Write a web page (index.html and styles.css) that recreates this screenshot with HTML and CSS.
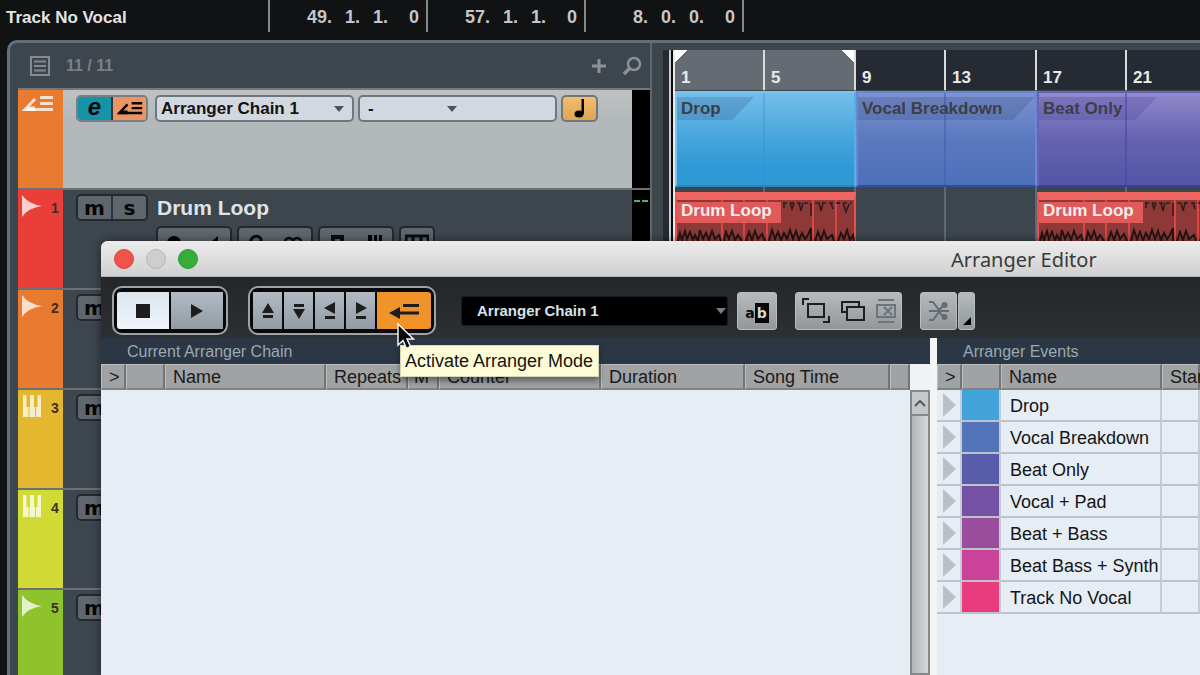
FILE: index.html
```html
<!DOCTYPE html>
<html lang="en">
<head>
<meta charset="utf-8">
<title>Arranger Editor</title>
<link rel="stylesheet" href="styles.css">
</head>
<body>
<svg class="defs" aria-hidden="true">
  <symbol id="arr" viewBox="0 0 32 18"><path d="M13 4 3 14.500H31" fill="none" stroke="currentColor" stroke-width="3"/><path d="M2 16 6 11.500H13V16ZM18 1H31V4H18ZM18 7H31V10H18Z" fill="currentColor"/></symbol>
  <symbol id="audio" viewBox="0 0 20 22"><path d="M0 0Q6 9 20 11Q6 13 0 22Z" fill="currentColor"/></symbol>
  <symbol id="keys" viewBox="0 0 18 22"><path d="M0 0H3.500V12H5.500V22H0ZM7 12V0H11V12H12V22H6.500V12ZM14.500 0H18V22H13V12H14.500Z" fill="currentColor"/></symbol>
  <symbol id="wave" viewBox="0 0 180 40">
    <path d="M107 2H133M139 2H176" stroke="#2b1c1c" stroke-width="1.500" stroke-dasharray="4 3"/>
    <path d="M108 2v5M114 2l2 6 2-6M123 2l2 8 2-8M135 2v13M143 2l2 8 2-8M155 2l2 6M167 2l3 9 3-8" fill="none" stroke="#2b1c1c" stroke-width="1.500"/>
    <path d="M2 40 4 32 6 39 9 30 11 38 14 31 17 39 19 34 22 40 24 29 27 38 30 32 33 39 36 30 39 38 43 34 45 40M48 40 50 31 53 38 56 30 59 39 62 34 66 40M70 40 73 31 76 39 79 30 82 38 86 33 89 40M93 40 96 29 99 38 102 31 105 39 108 32 111 38 114 29 117 38 120 30 123 39 126 32 129 38 132 34 135 27V40M139 40 142 31 145 39 148 30 151 38 156 34 158 40M162 40 165 32 168 38 171 29 174 39 177 34 178 40" fill="none" stroke="#241515" stroke-width="2"/>
  </symbol>
</svg>

<header class="infoline">
  <span class="infoline-name">Track No Vocal</span>
  <span class="pos"><b>49.</b><b>1.</b><b>1.</b><b>0</b></span>
  <span class="pos"><b>57.</b><b>1.</b><b>1.</b><b>0</b></span>
  <span class="pos pos-last"><b>8.</b><b>0.</b><b>0.</b><b>0</b></span>
</header>

<main class="project">
  <section class="tracks">
    <div class="tracks-head">
      <svg width="20" height="20" viewBox="0 0 20 20"><path d="M1 1H19V19H1ZM4 5.500H16M4 10H16M4 14.500H16" fill="none" stroke="currentColor" stroke-width="2"/></svg>
      <span class="count">11 / 11</span>
      <button class="plain" aria-label="Add track"><svg width="14" height="14" viewBox="0 0 14 14"><path d="M7 0V14M0 7H14" stroke="currentColor" stroke-width="3"/></svg></button>
      <button class="plain" aria-label="Find track"><svg width="20" height="20" viewBox="0 0 20 20"><circle cx="12" cy="8" r="6" fill="none" stroke="currentColor" stroke-width="2.500"/><path d="M8 12 2 18" stroke="currentColor" stroke-width="3.500"/></svg></button>
    </div>

    <div class="track track-arranger">
      <div class="strip orange"><svg width="32" height="18"><use href="#arr"/></svg></div>
      <div class="track-body">
        <div class="line">
          <div class="pair"><button class="edit">e</button><button class="peach" aria-label="Arranger mode"><svg width="26" height="15"><use href="#arr"/></svg></button></div>
          <span class="picker picker-light"><select aria-label="Arranger chain"><option>Arranger Chain 1</option></select></span>
          <span class="picker picker-light picker-mid"><select aria-label="Current item"><option>-</option></select></span>
          <button class="note" aria-label="Jump mode"><svg width="12" height="19" viewBox="0 0 12 19"><ellipse cx="5" cy="15" rx="4.500" ry="3.500"/><path d="M7.500 0H10V15H7.500Z"/></svg></button>
        </div>
      </div>
      <div class="meter"></div>
    </div>

    <div class="track">
      <div class="strip red"><svg width="20" height="22"><use href="#audio"/></svg><span>1</span></div>
      <div class="track-body">
        <div class="line">
          <div class="pair"><button>m</button><button>s</button></div>
          <span class="track-name">Drum Loop</span>
        </div>
        <div class="line line-tools">
          <div class="tool"><svg width="54" height="20" viewBox="0 0 54 20"><circle cx="7" cy="9" r="7"/><path d="M40 7H45L51 2V18L45 13H40Z"/></svg></div>
          <div class="tool"><svg width="54" height="20" viewBox="0 0 54 20"><path d="M2 10Q14 11 13 5Q10 0 4 4Q0 10 5 16H12" fill="none" stroke="#0b0c0d" stroke-width="3"/><circle cx="41" cy="8" r="4" fill="none" stroke="#0b0c0d" stroke-width="2.500"/><circle cx="49" cy="8" r="4" fill="none" stroke="#0b0c0d" stroke-width="2.500"/></svg></div>
          <div class="tool"><svg width="54" height="20" viewBox="0 0 54 20"><path d="M2 3H13V10H2M4 2V18M8 10 13 18" fill="none" stroke="#0b0c0d" stroke-width="4"/><path d="M39 1H43V18H39ZM45 1H48V18H45ZM50 1H53V18H50Z"/></svg></div>
          <div class="tool tool-small"><svg width="24" height="18" viewBox="0 0 24 18"><path d="M1 18V2H23V18M8 2V18M16 2V18" fill="none" stroke="#0b0c0d" stroke-width="3"/></svg></div>
        </div>
      </div>
      <div class="meter"><i></i><i></i></div>
    </div>

    <div class="track">
      <div class="strip orange"><svg width="20" height="22"><use href="#audio"/></svg><span>2</span></div>
      <div class="track-body"><div class="line"><div class="pair"><button>m</button><button>s</button></div></div></div>
      <div class="meter"></div>
    </div>
    <div class="track">
      <div class="strip yellow"><svg width="20" height="22"><use href="#keys"/></svg><span>3</span></div>
      <div class="track-body"><div class="line"><div class="pair"><button>m</button><button>s</button></div></div></div>
      <div class="meter"></div>
    </div>
    <div class="track">
      <div class="strip lime"><svg width="20" height="22"><use href="#keys"/></svg><span>4</span></div>
      <div class="track-body"><div class="line"><div class="pair"><button>m</button><button>s</button></div></div></div>
      <div class="meter"></div>
    </div>
    <div class="track">
      <div class="strip green"><svg width="20" height="22"><use href="#audio"/></svg><span>5</span></div>
      <div class="track-body"><div class="line"><div class="pair"><button>m</button><button>s</button></div></div></div>
      <div class="meter"></div>
    </div>
  </section>

  <section class="timeline">
    <div class="playhead"></div>
    <div class="lanes">
      <div class="ruler">
        <div class="span loop"><span>1</span><span>5</span></div>
        <div class="span"><span>9</span><span>13</span></div>
        <div class="span"><span>17</span><span>21</span></div>
      </div>
      <div class="lane">
        <div class="part part-drop"><span class="tag">Drop</span></div>
        <div class="part part-vocal"><span class="tag">Vocal Breakdown</span></div>
        <div class="part part-beat"><span class="tag">Beat Only</span></div>
      </div>
      <div class="lane lane-audio">
        <div class="clip"><span>Drum Loop</span><svg class="wave" width="180" height="40"><use href="#wave"/></svg></div>
        <div class="gap"></div>
        <div class="clip"><span>Drum Loop</span><svg class="wave" width="180" height="40"><use href="#wave"/></svg></div>
      </div>
    </div>
  </section>
</main>

<section class="editor">
  <div class="titlebar">
    <button class="light close" aria-label="Close"></button>
    <button class="light min" aria-label="Minimize"></button>
    <button class="light max" aria-label="Zoom"></button>
    <h1>Arranger Editor</h1>
  </div>

  <div class="toolbar">
    <div class="ring ring-transport">
      <button class="wide on" aria-label="Stop"><svg width="14" height="14"><path d="M0 0H14V14H0Z"/></svg></button>
      <button class="wide" aria-label="Play"><svg width="12" height="14"><path d="M0 0 12 7 0 14Z"/></svg></button>
    </div>
    <div class="ring ring-nav">
      <button aria-label="First"><svg width="12" height="18"><path d="M6 1 12 11H0ZM1 13H11V16H1Z"/></svg></button>
      <button aria-label="Last"><svg width="12" height="18"><path d="M1 2H11V5H1ZM0 7H12L6 17Z"/></svg></button>
      <button aria-label="Previous"><svg width="12" height="18"><path d="M11 0V12L0 6ZM1 14H11V17H1Z"/></svg></button>
      <button aria-label="Next"><svg width="12" height="18"><path d="M1 0 12 6 1 12ZM1 14H11V17H1Z"/></svg></button>
      <button class="wide active" aria-label="Activate Arranger Mode"><svg width="30" height="18"><path d="M0 11 11 5V17ZM10 9.500H30V12.500H10ZM14 2H30V5H14Z"/></svg></button>
    </div>
    <span class="picker picker-dark"><select aria-label="Chain"><option>Arranger Chain 1</option></select></span>
    <button class="chip ab" aria-label="Rename"><span>a</span><span class="inv">b</span></button>
    <div class="chip icons">
      <svg width="28" height="26" viewBox="0 0 28 26" fill="none" stroke="#1c1e20" stroke-width="2"><path d="M1 7V1H7M27 18V24H21M6 6H22V19H6Z"/></svg>
      <svg width="24" height="20" viewBox="0 0 24 20" fill="none" stroke="#1c1e20" stroke-width="2"><path d="M6 6H23V19H6ZM6 11H1V1H18V6"/></svg>
      <svg width="20" height="26" viewBox="0 0 20 26" fill="none" stroke="#6e7479" stroke-width="2"><path d="M2 2H18M2 24H18M1 7H19V19H1ZM8 9 16 17M16 9 8 17"/></svg>
    </div>
    <div class="split">
      <button class="chip" aria-label="Flatten"><svg width="20" height="20" viewBox="0 0 20 20" fill="none" stroke="#666c71" stroke-width="2"><path d="M0 1H4L10 9 14 5M0 10H20M0 19H4L10 11 14 15"/><circle cx="15.500" cy="4" r="3" fill="#666c71" stroke="none"/><circle cx="15.500" cy="16" r="3" fill="#666c71" stroke="none"/></svg></button>
      <button class="chip more" aria-label="Flatten options"><svg width="8" height="8"><path d="M8 0V8H0Z"/></svg></button>
    </div>
  </div>

  <div class="panes">
    <section class="pane pane-chain">
      <h2>Current Arranger Chain</h2>
      <div class="chain-area">
        <table>
          <colgroup><col class="c-arrow"><col class="c-color"><col class="c-name"><col class="c-rep"><col class="c-m"><col class="c-count"><col class="c-dur"><col class="c-time"><col></colgroup>
          <thead><tr><th class="arrow">&gt;</th><th></th><th>Name</th><th>Repeats</th><th>M</th><th>Counter</th><th>Duration</th><th>Song Time</th><th></th></tr></thead>
        </table>
        <div class="scroll">
          <button aria-label="Scroll up"><svg width="12" height="8"><path d="M1 7 6 2 11 7" fill="none" stroke="#55595c" stroke-width="2"/></svg></button>
          <div class="thumb"></div>
        </div>
      </div>
    </section>

    <section class="pane pane-events">
      <h2>Arranger Events</h2>
      <table class="events">
        <colgroup><col class="c-arrow"><col class="c-color"><col class="c-name"><col></colgroup>
        <thead><tr><th class="arrow">&gt;</th><th></th><th>Name</th><th>Start</th></tr></thead>
        <tbody>
          <tr><td><i class="tri"></i></td><td class="e1"></td><td>Drop</td><td></td></tr>
          <tr><td><i class="tri"></i></td><td class="e2"></td><td>Vocal Breakdown</td><td></td></tr>
          <tr><td><i class="tri"></i></td><td class="e3"></td><td>Beat Only</td><td></td></tr>
          <tr><td><i class="tri"></i></td><td class="e4"></td><td>Vocal + Pad</td><td></td></tr>
          <tr><td><i class="tri"></i></td><td class="e5"></td><td>Beat + Bass</td><td></td></tr>
          <tr><td><i class="tri"></i></td><td class="e6"></td><td>Beat Bass + Synth</td><td></td></tr>
          <tr><td><i class="tri"></i></td><td class="e7"></td><td>Track No Vocal</td><td></td></tr>
        </tbody>
      </table>
    </section>
  </div>

  <div class="tooltip" role="tooltip">Activate Arranger Mode</div>
  <svg class="cursor" width="18" height="28" viewBox="0 0 18 28"><path d="M1 2V23L6 18.500 9.500 26.500 13.500 24.500 10 17H16.500Z" fill="#080808" stroke="#f2f2f2" stroke-width="1.500"/></svg>
</section>
</body>
</html>
```

FILE: styles.css
```css
* { box-sizing: border-box; }

body {
  margin: 0;
  height: 100vh;
  overflow: hidden;
  position: relative;
  display: flex;
  flex-direction: column;
  background: #111213;
  font-family: "Liberation Sans", Arial, sans-serif;
  font-size: 18px;
  color: #141414;
}

button, select {
  font: inherit;
  color: inherit;
  border: 0;
  padding: 0;
  margin: 0;
  background: none;
}

button { display: flex; align-items: center; justify-content: center; }
svg { display: block; flex: none; }
.defs { display: none; }

/* Info line */
.infoline { display: flex; height: 40px; flex: none; }
.infoline-name { width: 268px; padding: 8px 0 0 6px; font-size: 17px; font-weight: bold; line-height: 20px; color: #e2e4e6; }
.pos {
  display: grid;
  grid-template-columns: 62px 28px 28px 31px;
  width: 158px;
  height: 32px;
  padding-top: 7px;
  border-left: 2px solid #85898c;
  line-height: 20px;
  text-align: right;
  color: #c3c7cb;
}
.pos-last { width: 160px; border-right: 2px solid #85898c; }

/* Project window */
.project {
  flex: 1;
  min-height: 0;
  display: flex;
  margin-left: 7px;
  padding-left: 8px;
  border: 3px solid #61707f;
  border-width: 3px 0 0 3px;
  border-top-left-radius: 10px;
  background: #3d454d;
  overflow: hidden;
}
.tracks { width: 634px; flex: none; border-right: 2px solid #60666c; }
.tracks-head {
  display: flex;
  align-items: center;
  height: 47px;
  padding: 0 8px 0 12px;
  gap: 16px;
  color: #858a8e;
  border-bottom: 2px solid #74797d;
}
.count { flex: 1; font-size: 16px; font-weight: bold; color: #7c8185; }
.plain { color: #8d9296; }

.track { display: flex; height: 100px; border-bottom: 2px solid #6c7074; }
.track-arranger { background: linear-gradient(#bfc2c3, #b3b9bb 30%); }
.strip { width: 45px; display: flex; align-items: flex-start; padding: 5px 0 0 4px; color: rgba(255, 255, 255, .75); }
.strip span { margin: 3px 0 0 9px; font-size: 14px; line-height: 20px; font-weight: bold; color: #3b2f22; }
.orange { background: #e97b31; }
.red { background: #ea3e38; }
.yellow { background: #e4b82e; }
.lime { background: #d2da35; }
.green { background: #8fc32c; }
.track-body { flex: 1; padding: 4px 0 0 13px; }
.track-arranger .track-body { padding-top: 5px; }
.line { display: flex; align-items: center; gap: 4px; }
.line-tools { gap: 5px; margin: 5px 0 0 80px; }
.meter { width: 18px; background: #000; display: flex; gap: 2px; padding: 10px 2px; }
.meter i { flex: 1; height: 2px; background: #51b067; }

.pair {
  display: flex;
  height: 27px;
  width: 72px;
  margin-right: 3px;
  border: 2px solid #24292d;
  border-radius: 5px;
  overflow: hidden;
}
.pair button { flex: 1; background: #5f666d; font: bold 20px/20px "DejaVu Sans", sans-serif; color: #060606; }
.pair button + button { border-left: 2px solid #30353a; }
.track-arranger .pair { border-color: #7a7f84; }
.pair .edit { background: #1693a7; font: italic bold 24px/20px "Liberation Sans", sans-serif; padding-bottom: 3px; }
.pair .peach { background: #ec9562; }
.track-name { font-size: 21px; font-weight: bold; line-height: 27px; color: #dfe4ea; padding-left: 2px; }
.tool {
  display: flex;
  justify-content: center;
  width: 76px;
  height: 27px;
  padding-top: 6px;
  border: 2px solid #23282c;
  border-radius: 5px;
  background: #5f666d;
}
.tool-small { width: 36px; }

/* Drop-downs */
.picker { display: grid; align-items: center; }
.picker > * { grid-area: 1 / 1; }
.picker::after {
  content: "";
  grid-area: 1 / 1;
  justify-self: end;
  width: 0;
  margin-right: 8px;
  border: 5px solid transparent;
  border-top: 6px solid #4e5357;
  border-bottom: 0;
  pointer-events: none;
}
.picker select { appearance: none; width: 100%; height: 100%; outline: 0; }
.picker-light { width: 199px; height: 27px; border: 2px solid #6f7882; border-radius: 5px; background: #d3d8e0; }
.picker-light select { padding-left: 4px; font-size: 17px; font-weight: bold; }
.picker-mid::after { justify-self: center; margin-right: 12px; }
.picker-mid select { padding-left: 8px; }
.note { width: 37px; height: 27px; border: 2px solid #74777a; border-radius: 5px; background: linear-gradient(#f2bd6d, #dca655); }

/* Timeline */
.timeline { flex: 1; min-width: 0; display: flex; padding: 7px 0 0 11px; }
.playhead {
  width: 12px;
  flex: none;
  background: linear-gradient(90deg, #262b33 6px, #c9cccf 6px 8px, #0a0a0a 8px 10px, #e8eaec 10px);
}
.lanes {
  flex: 1;
  min-width: 0;
  overflow: hidden;
  background: repeating-linear-gradient(90deg, transparent 0 88px, #5d6a75 88px 90px, transparent 90px 179px, #5d6a75 179px 181px);
}
.ruler, .lane { display: flex; width: max-content; }
.ruler { height: 40px; background: #262b33; }
.span {
  display: grid;
  grid-template-columns: 88px 1fr;
  width: 181px;
  border-right: 2px solid #d9dbdd;
  color: #e8eaec;
  font-size: 17px;
  font-weight: bold;
}
.span span { padding: 18px 0 0 6px; line-height: 20px; }
.span span + span { border-left: 2px solid #d9dbdd; }
.loop {
  background:
    linear-gradient(135deg, #fff 9px, transparent 9px) 0 0 / 14px 14px no-repeat,
    linear-gradient(225deg, #fff 9px, transparent 9px) 100% 0 / 14px 14px no-repeat,
    #656b73;
}
.lane { padding-top: 1px; }
.part {
  width: 181px;
  height: 96px;
  padding-top: 4px;
  border: 2px solid;
}
.part .tag {
  display: inline-block;
  min-width: 77px;
  padding: 0 24px 0 4px;
  font-weight: bold;
  font-size: 17px;
  line-height: 23px;
  color: #3d3f45;
  background: rgba(40, 70, 120, .22);
  clip-path: polygon(0 0, 100% 0, calc(100% - 22px) 100%, 0 100%);
}
.part-drop { background: linear-gradient(90deg, transparent 86px, #2b8fd055 86px 88px, transparent 88px), linear-gradient(#74bfeb, #4aa7dd 45%, #2f99d6 80%); border-color: #7cc4ee #57b0e2 #2a86bb #7cc4ee; }
.part-vocal { background: linear-gradient(90deg, transparent 86px, #3d5fae88 86px 88px, transparent 88px), linear-gradient(#7e92cf, #5b79c0 50%, #4e6fba); border-color: #6589d6 #6e88cf #304ea5 #6589d6; }
.part-beat { background: linear-gradient(90deg, transparent 86px, #4345a388 86px 88px, transparent 88px), linear-gradient(#9089ca, #6662b1 50%, #5355a7); border-color: #6a62b8 #6a62b8 #3a3c96 #6a62b8; }
.part-vocal .tag { width: 100%; white-space: nowrap; padding-right: 0; }
.part-beat .tag { min-width: 118px; background: rgba(70, 60, 150, .25); }
.lane-audio { padding-top: 5px; }
.clip {
  position: relative;
  width: 181px;
  height: 96px;
  border: 2px solid #e9504d;
  border-top: 8px solid #ef6562;
  background: linear-gradient(90deg, transparent 44px, #d94643 44px 46px, transparent 46px 66px, #d94643 66px 68px, transparent 68px 89px, #d94643 89px 91px, transparent 91px 135px, #d94643 135px 137px, transparent 137px 158px, #d94643 158px 160px, transparent 160px), #8e3937;
}
.clip span {
  display: inline-block;
  padding: 0 9px 3px 4px;
  font-size: 17px;
  font-weight: bold;
  line-height: 18px;
  color: #f6ecee;
  background: #df5a58;
}
.wave { position: absolute; left: -1px; top: 1px; }
.gap { width: 181px; }

/* Arranger Editor window */
.editor {
  position: absolute;
  left: 101px;
  right: 0;
  top: 241px;
  bottom: 0;
  display: flex;
  flex-direction: column;
  border-top-left-radius: 7px;
  background: #e6edf5;
  box-shadow: 0 0 8px rgba(0, 0, 0, .5);
}
.titlebar {
  display: flex;
  align-items: center;
  height: 36px;
  flex: none;
  gap: 12px;
  padding-left: 13px;
  border-top-left-radius: 7px;
  background: linear-gradient(#ececec, #d0d0d0);
  border-bottom: 1px solid #b5b5b5;
}
.light { width: 20px; height: 20px; border-radius: 50%; flex: none; }
.close { background: #ee544c; border: 1px solid #d9473f; }
.min { background: #cecece; border: 1px solid #b5b5b5; }
.max { background: #36ac3a; border: 1px solid #309c35; }
h1 { flex: 1; margin: 0; padding: 2px 0 0 741px; font: 20px/28px "Noto Sans", sans-serif; color: #3a3a3a; white-space: nowrap; }

.toolbar {
  display: flex;
  align-items: center;
  height: 61px;
  flex: none;
  padding: 8px 0 0 11px;
  background: linear-gradient(#24272a, #2d3032);
}
.toolbar > * { flex: none; margin-bottom: 2px; }
.ring {
  display: flex;
  gap: 2px;
  height: 49px;
  padding: 4px 3px;
  border: 2px solid #a0a3a5;
  border-radius: 10px;
  background: #08090a;
}
.ring-transport { margin-right: 20px; }
.ring-nav { margin-right: 25px; }
.ring button { width: 29px; background: linear-gradient(#b2bac4, #929aa4); fill: #1b1d1f; }
.ring .wide { width: 52px; }
.ring .on { background: linear-gradient(#dce4ee, #f1f6fb); border-radius: 3px 0 0 3px; }
.ring .active { width: 54px; background: #f0932b; border-radius: 0 3px 3px 0; }
.picker-dark { width: 267px; height: 30px; margin-right: 9px; background: #000; border: 1px solid #17191a; border-radius: 3px; }
.picker-dark select { padding-left: 15px; font-size: 15px; font-weight: bold; color: #d7e2ec; }
.picker-dark::after { margin-right: 1px; border-top-color: #777d80; }
.chip {
  display: flex;
  align-items: center;
  justify-content: center;
  height: 38px;
  border-radius: 3px;
  background: linear-gradient(#b5babd, #92979b);
  border: 1px solid #b9bdc0;
}
.ab { width: 40px; margin-right: 18px; padding-top: 4px; font: bold 14px/20px "DejaVu Sans", sans-serif; color: #0c0c0c; }
.ab .inv { background: #060606; color: #d5d8da; padding: 0 2px; }
.icons { width: 107px; gap: 11px; margin-right: 18px; }
.split { display: flex; gap: 1px; }
.split .chip { width: 37px; }
.split .more { width: 17px; align-items: flex-end; justify-content: flex-end; padding: 0 3px 4px 0; }

.panes { flex: 1; min-height: 0; display: flex; gap: 7px; background: #f3f4f6; }
.pane { background: #e6edf5; min-width: 0; }
.pane-chain { width: 829px; flex: none; display: flex; flex-direction: column; }
.pane-events { flex: 1; overflow: hidden; }
h2 {
  margin: 0;
  height: 26px;
  padding: 4px 0 0 26px;
  font-size: 16px;
  line-height: 20px;
  font-weight: normal;
  color: #9ca8b3;
  background: #2b3745;
}
.chain-area { flex: 1; display: flex; align-items: flex-start; }
table { width: 100%; table-layout: fixed; border-collapse: separate; border-spacing: 0; }
.chain-area table { width: 809px; }
.c-arrow { width: 25px; }
.c-color { width: 39px; }
.c-name { width: 161px; }
.c-rep { width: 82px; }
.c-m { width: 31px; }
.c-count { width: 162px; }
.c-dur { width: 144px; }
.c-time { width: 145px; }
th {
  height: 26px;
  padding: 1px 0 0 7px;
  font-weight: normal;
  font-size: 18px;
  line-height: 20px;
  text-align: left;
  white-space: nowrap;
  color: #1a1a1a;
  background: #a0a2a4;
  border: 1px solid #bcbebf;
  border-right: 2px solid #727577;
  border-bottom: 2px solid #808385;
}
th:nth-child(5) { padding-left: 5px; }
.scroll { width: 20px; align-self: stretch; display: flex; flex-direction: column; padding-top: 26px; background: #f1f2f4; }
.scroll button { height: 26px; border: 2px solid #85888b; background: #c5c7c8; }
.thumb { flex: 1; border: 2px solid #85888b; border-top: 0; background: linear-gradient(90deg, #b4b6b8, #d4d6d7); }

td { height: 32px; padding: 2px 0 0 9px; line-height: 20px; white-space: nowrap; border-right: 2px solid #c5ccd3; border-bottom: 2px solid #bcc3ca; }
td:first-child { padding: 0 0 0 6px; }
.tri { display: block; width: 0; border: 12px solid transparent; border-left: 13px solid #bcc0c5; border-right: 0; }
.e1 { background: #43a4dc; }
.e2 { background: #5374bb; }
.e3 { background: #575dab; }
.e4 { background: #7551a3; }
.e5 { background: #9b4d9d; }
.e6 { background: #ca4398; }
.e7 { background: #e93c7c; }

.tooltip {
  position: absolute;
  left: 299px;
  top: 104px;
  padding: 5px 5px 5px 4px;
  line-height: 20px;
  white-space: nowrap;
  background: #fdfcd6;
  border: 1px solid #d8d7b8;
  box-shadow: 0 4px 6px rgba(0, 0, 0, .4);
}
.cursor { position: absolute; left: 296px; top: 81px; }
```
